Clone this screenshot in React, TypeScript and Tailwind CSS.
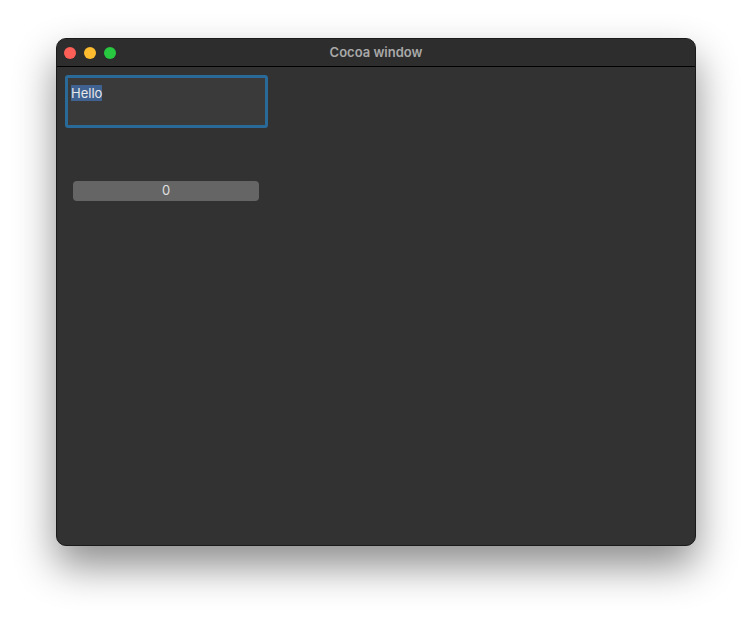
export default function App() {
  return (
    <div className="w-[752px] h-[620px] bg-white relative" style={{ fontFamily: "Inter, 'Liberation Sans', sans-serif" }}>
      <div className="absolute left-[56px] top-[38px] w-[640px] h-[508px] rounded-[10px] bg-[#323232] border border-[#1a1a1a] shadow-[0_20px_40px_rgba(0,0,0,0.45)] overflow-hidden flex flex-col">
        <div className="h-[28px] bg-[#2d2d2d] border-b border-black flex items-center relative shrink-0">
          <div className="flex gap-2 pl-[7px]">
            <span className="w-3 h-3 rounded-full bg-[#fe5f57]" />
            <span className="w-3 h-3 rounded-full bg-[#febc2e]" />
            <span className="w-3 h-3 rounded-full bg-[#28c840]" />
          </div>
          <span className="absolute inset-0 flex items-center justify-center text-[13px] font-semibold text-[#a9a9a9]">Cocoa window</span>
        </div>
        <div className="flex-1 pl-[8px] pt-[8px]">
          <div className="w-[203px] h-[53px] rounded-[3px] border-[3px] border-[#2a6a99] bg-[#3a3a3a] px-[3px] pt-[2px]">
            <span className="bg-[#3f6291] text-[13px] leading-[17px] text-[#e8e8e8]">Hello</span>
          </div>
          <div className="mt-[53px] ml-[8px] w-[186px] h-[20px] rounded-[4px] bg-[#656565] flex items-center justify-center text-[13px] text-[#e0e0e0]">0</div>
        </div>
      </div>
    </div>
  );
}
